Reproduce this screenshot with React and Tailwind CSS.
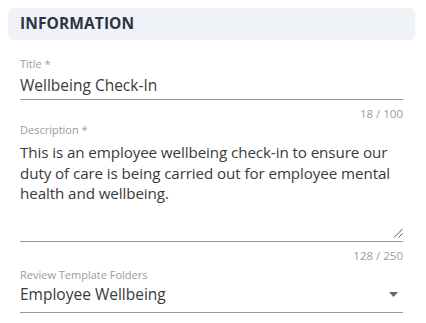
import React from 'react';

const font = { fontFamily: '"Open Sans", "Noto Sans", Arial, sans-serif' };

const Label = ({ children }) => (
    <div className="h-[15px] text-[11px] leading-[15px] text-[#9c9c9c]">{children}</div>
);

const Counter = ({ children }) => (
    <div className="h-[16px] text-right text-[11.5px] leading-[16px] text-[#9c9c9c]">{children}</div>
);

export default function App() {
    return (
        <div className="w-[426px] h-[323px] bg-white pl-2 pr-[11px] pt-2" style={font}>
            {/* section header */}
            <div className="h-8 rounded-md bg-[#eff3f7] pl-3 flex items-center">
                <span className="text-[15.5px] font-bold tracking-[0.1px] text-[#2d3445]">INFORMATION</span>
            </div>

            <div className="px-3">
                {/* title */}
                <div className="mt-4">
                    <Label>Title *</Label>
                    <div className="h-[29px] border-b border-[#999] pt-[2px] text-[15.5px] leading-[24px] text-[#3a3a3a]">
                        Wellbeing Check-In
                    </div>
                    <div className="mt-[6px]"><Counter>18 / 100</Counter></div>
                </div>

                {/* description */}
                <div>
                    <Label>Description *</Label>
                    <div className="relative h-[105px] border-b border-[#999] pt-[5px] text-[15.2px] leading-[20.5px] tracking-[-0.1px] text-[#3a3a3a]">
                        This is an employee wellbeing check-in to ensure our duty of care is being carried out for employee mental health and wellbeing.
                        <svg className="absolute right-0 bottom-[3px]" width="12" height="10" viewBox="0 0 12 10">
                            <path d="M3 9.5L11.5 1M7.5 9.5L11.5 5.5" stroke="#555" strokeWidth="1" fill="none" />
                        </svg>
                    </div>
                    <div className="mt-[6px]"><Counter>128 / 250</Counter></div>
                </div>

                {/* folder select */}
                <div className="mt-[3px]">
                    <Label>Review Template Folders</Label>
                    <div className="h-[31px] border-b border-[#999] flex items-start justify-between text-[15.5px] leading-[24px] text-[#3a3a3a]">
                        <span>Employee Wellbeing</span>
                        <svg className="mt-[10px] mr-[5px]" width="9" height="5" viewBox="0 0 9 5">
                            <path d="M0 0H9L4.5 5Z" fill="#666" />
                        </svg>
                    </div>
                </div>
            </div>
        </div>
    );
}
